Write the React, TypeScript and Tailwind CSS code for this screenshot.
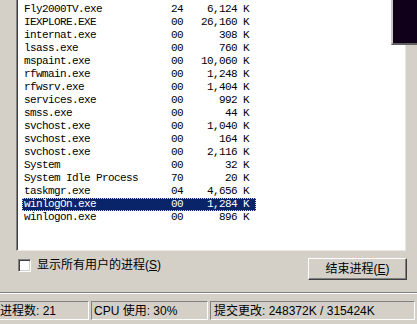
import React from 'react';

type Proc = { name: string; cpu: string; mem: string };

const procs: Proc[] = [
  { name: 'Fly2000TV.exe', cpu: '24', mem: '6,124 K' },
  { name: 'IEXPLORE.EXE', cpu: '00', mem: '26,160 K' },
  { name: 'internat.exe', cpu: '00', mem: '308 K' },
  { name: 'lsass.exe', cpu: '00', mem: '760 K' },
  { name: 'mspaint.exe', cpu: '00', mem: '10,060 K' },
  { name: 'rfwmain.exe', cpu: '00', mem: '1,248 K' },
  { name: 'rfwsrv.exe', cpu: '00', mem: '1,404 K' },
  { name: 'services.exe', cpu: '00', mem: '992 K' },
  { name: 'smss.exe', cpu: '00', mem: '44 K' },
  { name: 'svchost.exe', cpu: '00', mem: '1,040 K' },
  { name: 'svchost.exe', cpu: '00', mem: '164 K' },
  { name: 'svchost.exe', cpu: '00', mem: '2,116 K' },
  { name: 'System', cpu: '00', mem: '32 K' },
  { name: 'System Idle Process', cpu: '70', mem: '20 K' },
  { name: 'taskmgr.exe', cpu: '04', mem: '4,656 K' },
  { name: 'winlogOn.exe', cpu: '00', mem: '1,284 K' },
  { name: 'winlogon.exe', cpu: '00', mem: '896 K' },
];

const SELECTED = 15;

const App = () => {
  return (
    <div
      className="relative flex h-[324px] w-[417px] flex-col overflow-hidden bg-[#d4d0c8] text-black"
      style={{ fontFamily: '"Liberation Sans", "Noto Sans CJK SC", sans-serif' }}
    >
      {/* Process list */}
      <div className="flex h-[251px]">
        <div className="w-[16px] shrink-0" />
        <div className="flex w-[390px] shrink-0 flex-col overflow-hidden border-l border-r border-b border-l-[#808080] border-r-[#e8e6e0] border-b-[#e8e6e0] bg-white">
          <div className="flex h-full flex-col overflow-hidden border-l border-[#404040] pl-[4px] pt-[3px]">
            {procs.map((p, i) => (
              <div
                key={i}
                className={`flex h-[13px] w-[234px] shrink-0 items-center pl-[2px] text-[11px] leading-none tracking-[-0.6px] ${
                  i === SELECTED
                    ? 'bg-[#0a246a] text-white outline-1 outline-dotted -outline-offset-1 outline-[#d4d0c8]'
                    : ''
                }`}
                style={{ fontFamily: '"Liberation Mono", monospace' }}
              >
                <span className="w-[147px] shrink-0 whitespace-pre">{p.name}</span>
                <span className="w-[12px] shrink-0">{p.cpu}</span>
                <span className="flex-1 pr-[7px] text-right">{p.mem}</span>
              </div>
            ))}
          </div>
        </div>
        <div className="flex-1" />
      </div>

      {/* Controls */}
      <div className="flex h-[41px] items-start">
        <label className="ml-[18px] mt-[8px] flex items-center gap-[6px] text-[12px] leading-[13px]">
          <span className="h-[13px] w-[13px] shrink-0 border border-t-[#808080] border-l-[#808080] border-r-white border-b-white bg-white shadow-[inset_1px_1px_0_#404040,inset_-1px_-1px_0_#d4d0c8]" />
          <span>
            显示所有用户的进程(<span className="underline">S</span>)
          </span>
        </label>
        <div className="flex-1" />
        <button className="mr-[10px] mt-[7px] flex h-[22px] w-[99px] items-center justify-center border border-t-white border-l-white border-r-[#404040] border-b-[#404040] bg-[#d4d0c8] text-[12px] shadow-[inset_-1px_-1px_0_#808080]">
          结束进程(<span className="underline">E</span>)
        </button>
      </div>

      {/* Separator */}
      <div className="h-[2px] border-t border-b border-t-[#808080] border-b-white" />

      {/* Status bar */}
      <div className="mt-[6px] flex h-[20px] gap-[2px] pt-[1px] text-[12px]">
        <div className="-ml-[3px] flex w-[92px] items-center border border-t-[#808080] border-l-[#808080] border-r-white border-b-white pl-[2px]">
          进程数: 21
        </div>
        <div className="flex w-[117px] items-center border border-t-[#808080] border-l-[#808080] border-r-white border-b-white pl-[2px]">
          CPU 使用: 30%
        </div>
        <div className="flex w-[205px] items-center border border-t-[#808080] border-l-[#808080] border-r-white border-b-white pl-[3px]">
          提交更改: 248372K / 315424K
        </div>
      </div>

      {/* Overlapping dark window corner */}
      <div className="absolute left-[391px] top-0 h-[45px] w-[26px] border-l-2 border-b-2 border-l-[#c8c8c8] border-b-[#606060] bg-[#10001a]" />
    </div>
  );
};

export default App;
